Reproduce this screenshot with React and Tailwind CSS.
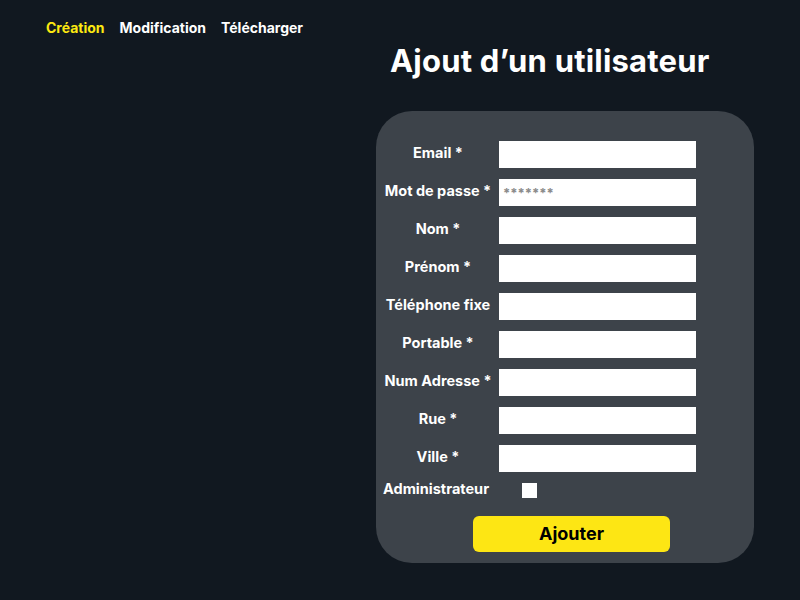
import React from "react";

const fields = [
  { label: "Email *" },
  { label: "Mot de passe *", placeholder: "*******", type: "password" },
  { label: "Nom *" },
  { label: "Prénom *" },
  { label: "Téléphone fixe" },
  { label: "Portable *" },
  { label: "Num Adresse *" },
  { label: "Rue *" },
  { label: "Ville *" },
];

export default function App() {
  return (
    <div
      className="min-h-screen w-full bg-[#111820] text-white"
      style={{ fontFamily: "Inter, 'Noto Sans', sans-serif" }}
    >
      <nav className="flex gap-[15px] pl-[46px] pt-[18px] text-[14px] font-bold leading-[20px]">
        <a className="text-[#fde910]">Création</a>
        <a className="text-white">Modification</a>
        <a className="text-white">Télécharger</a>
      </nav>
      <h1 className="ml-[390px] mt-[3px] text-[31px] font-bold leading-[40px] tracking-[0.2px]">
        Ajout d’un utilisateur
      </h1>
      <div className="ml-[376px] mt-[30px] w-[378px] h-[452px] rounded-[36px] bg-[#3d434a] pl-[7px] pt-[30px]">
        <div className="flex flex-col gap-[11px]">
          {fields.map((f) => (
            <div key={f.label} className="flex items-center">
              <label className="w-[110px] mr-[6px] pb-[3px] text-center text-[14.5px] font-bold leading-[20px] whitespace-nowrap">
                {f.label}
              </label>
              <input
                type="text"
                placeholder={f.placeholder}
                className="w-[197px] h-[27px] bg-white px-[4px] text-[13px] font-bold text-black placeholder:text-[#8a8a8a] outline-none"
              />
            </div>
          ))}
        </div>
        <div className="flex items-center mt-[7px]">
          <label className="w-[116px] pb-[3px] text-[14.5px] font-bold leading-[20px]">
            Administrateur
          </label>
          <input
            type="checkbox"
            className="ml-[23px] w-[15px] h-[15px] appearance-none bg-white"
          />
        </div>
        <div className="ml-[90px] mt-[14px]">
          <button className="w-[197px] h-[36px] rounded-[6px] bg-[#fde614] text-black text-[18px] font-bold leading-[24px]">
            Ajouter
          </button>
        </div>
      </div>
    </div>
  );
}
